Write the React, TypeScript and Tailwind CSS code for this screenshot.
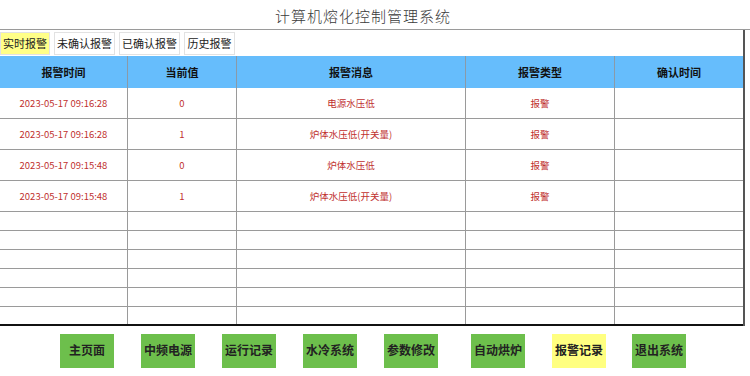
const cols = "grid grid-cols-[128px_109px_229px_149px_1fr]";

const rows = [
  { time: "2023-05-17 09:16:28", value: "0", msg: "电源水压低", type: "报警" },
  { time: "2023-05-17 09:16:28", value: "1", msg: "炉体水压低(开关量)", type: "报警" },
  { time: "2023-05-17 09:15:48", value: "0", msg: "炉体水压低", type: "报警" },
  { time: "2023-05-17 09:15:48", value: "1", msg: "炉体水压低(开关量)", type: "报警" },
];

const tabs = [
  { label: "实时报警", active: true, w: "w-[50px]" },
  { label: "未确认报警", active: false, w: "w-[61px]" },
  { label: "已确认报警", active: false, w: "w-[61px]" },
  { label: "历史报警", active: false, w: "w-[51px]" },
];

const buttons = [
  { label: "主页面", ml: "ml-[60px]", active: false },
  { label: "中频电源", ml: "ml-[27px]", active: false },
  { label: "运行记录", ml: "ml-[27px]", active: false },
  { label: "水冷系统", ml: "ml-[27px]", active: false },
  { label: "参数修改", ml: "ml-[27px]", active: false },
  { label: "自动烘炉", ml: "ml-[33px]", active: false },
  { label: "报警记录", ml: "ml-[27px]", active: true },
  { label: "退出系统", ml: "ml-[26px]", active: false },
];

const headers = ["报警时间", "当前值", "报警消息", "报警类型", "确认时间"];

export default function App() {
  return (
    <div className="w-[750px] h-[376px] bg-white font-['Noto_Sans_CJK_SC',sans-serif] overflow-hidden">
      <div className="h-[30px] flex items-end justify-center pb-[1px] pr-[24px] border-b border-[#9a9a9a] text-[15px] font-light tracking-[1px] text-[#3a3a3a] font-['Liberation_Serif','Noto_Sans_CJK_SC',serif]">
        计算机熔化控制管理系统
      </div>

      <div className="w-[745px] border-r-2 border-[#555]">
        <div className="h-[26px] flex items-start gap-[4px] pt-[2px]">
          {tabs.map((t) => (
            <div
              key={t.label}
              className={`h-[23px] ${t.w} flex items-center justify-center text-[11px] text-[#222] border border-[#e2e2e2] ${
                t.active ? "bg-[#ffff88]" : "bg-white"
              }`}
            >
              {t.label}
            </div>
          ))}
        </div>

        <div className={`${cols} h-[32px] bg-[#66bdfc]`}>
          {headers.map((h, i) => (
            <div
              key={h}
              className={`flex items-center justify-center text-[11px] font-bold text-[#111] ${
                i < 4 ? "border-r border-[#8a9aa8]" : ""
              }`}
            >
              {h}
            </div>
          ))}
        </div>

        {rows.map((r, idx) => (
          <div key={idx} className={`${cols} h-[31px] border-b border-[#9a9a9a] text-[9.5px] text-[#c0302e]`}>
            <div className="flex items-center justify-center border-r border-[#9a9a9a]">{r.time}</div>
            <div className="flex items-center justify-center border-r border-[#9a9a9a]">{r.value}</div>
            <div className="flex items-center justify-center border-r border-[#9a9a9a]">{r.msg}</div>
            <div className="flex items-center justify-center border-r border-[#9a9a9a]">{r.type}</div>
            <div />
          </div>
        ))}

        {[0, 1, 2, 3, 4, 5].map((i) => (
          <div
            key={i}
            className={`${cols} h-[19px] ${i < 5 ? "border-b border-[#9a9a9a]" : "border-b-2 border-[#111]"}`}
          >
            <div className="border-r border-[#9a9a9a]" />
            <div className="border-r border-[#9a9a9a]" />
            <div className="border-r border-[#9a9a9a]" />
            <div className="border-r border-[#9a9a9a]" />
            <div />
          </div>
        ))}
      </div>

      <div className="flex items-start pt-[8px]">
        {buttons.map((b) => (
          <div
            key={b.label}
            className={`${b.ml} w-[54px] h-[34px] flex items-center justify-center text-[12px] font-bold text-[#222] font-['Liberation_Serif','Noto_Sans_CJK_SC',serif] ${
              b.active ? "bg-[#ffff80]" : "bg-[#6dbf4c]"
            }`}
          >
            {b.label}
          </div>
        ))}
      </div>
    </div>
  );
}
